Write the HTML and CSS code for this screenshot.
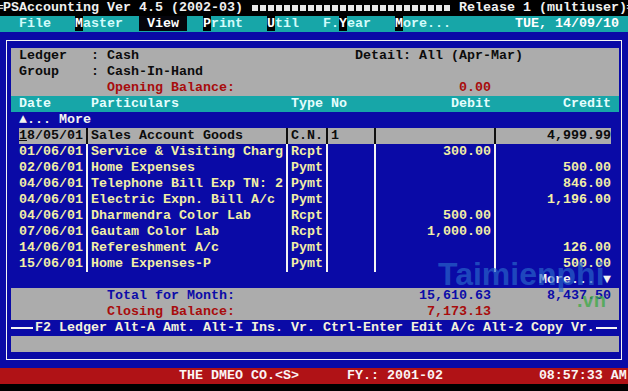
FILE: index.html
```html
<!DOCTYPE html>
<html>
<head>
<meta charset="utf-8">
<link rel="stylesheet" href="styles.css">
</head>
<body>
<div class="screen">
  <div class="row title">═PSAccounting Ver 4.5 (2002-03) <span class="blocks"></span> Release 1 (multiuser)═</div>
  <div class="row menu">   File   <span class="hk">M</span>aster  <span class="on"> View </span>  <span class="hk">P</span>rint   <span class="hk">U</span>til   F.<span class="hk">Y</span>ear   <span class="hk">M</span>ore...        <span class="date">TUE, 14/09/10</span></div>
  <div class="win">
    <div class="frame">
      <div class="row panel"> Ledger   : Cash                           Detail: All (Apr-Mar)</div>
      <div class="row panel"> Group    : Cash-In-Hand</div>
      <div class="row panel"><span class="red">            Opening Balance:                            0.00</span></div>

      <div class="grid head">
        <span></span><span>Date</span><span></span><span>Particulars</span><span></span><span>Type</span><span></span><span>No</span><span></span><span class="r">Debit</span><span></span><span class="r">Credit</span><span></span>
      </div>

      <div class="row blue"> ▲... More</div>

      <div class="grid data cur">
        <span></span><span><span class="cursor">1</span>8/05/01</span><span class="s"></span><span>Sales Account Goods</span><span class="s"></span><span>C.N.</span><span class="s"></span><span>1</span><span class="s"></span><span class="r"></span><span class="s"></span><span class="r">4,999.99</span><span></span>
      </div>
      <div class="grid data">
        <span></span><span>01/06/01</span><span class="s"></span><span>Service &amp; Visiting Charg</span><span class="s"></span><span>Rcpt</span><span class="s"></span><span></span><span class="s"></span><span class="r">300.00</span><span class="s"></span><span class="r"></span><span></span>
      </div>
      <div class="grid data">
        <span></span><span>02/06/01</span><span class="s"></span><span>Home Expenses</span><span class="s"></span><span>Pymt</span><span class="s"></span><span></span><span class="s"></span><span class="r"></span><span class="s"></span><span class="r">500.00</span><span></span>
      </div>
      <div class="grid data">
        <span></span><span>04/06/01</span><span class="s"></span><span>Telephone Bill Exp TN: 2</span><span class="s"></span><span>Pymt</span><span class="s"></span><span></span><span class="s"></span><span class="r"></span><span class="s"></span><span class="r">846.00</span><span></span>
      </div>
      <div class="grid data">
        <span></span><span>04/06/01</span><span class="s"></span><span>Electric Expn. Bill A/c</span><span class="s"></span><span>Pymt</span><span class="s"></span><span></span><span class="s"></span><span class="r"></span><span class="s"></span><span class="r">1,196.00</span><span></span>
      </div>
      <div class="grid data">
        <span></span><span>04/06/01</span><span class="s"></span><span>Dharmendra Color Lab</span><span class="s"></span><span>Rcpt</span><span class="s"></span><span></span><span class="s"></span><span class="r">500.00</span><span class="s"></span><span class="r"></span><span></span>
      </div>
      <div class="grid data">
        <span></span><span>07/06/01</span><span class="s"></span><span>Gautam Color Lab</span><span class="s"></span><span>Rcpt</span><span class="s"></span><span></span><span class="s"></span><span class="r">1,000.00</span><span class="s"></span><span class="r"></span><span></span>
      </div>
      <div class="grid data">
        <span></span><span>14/06/01</span><span class="s"></span><span>Refereshment A/c</span><span class="s"></span><span>Pymt</span><span class="s"></span><span></span><span class="s"></span><span class="r"></span><span class="s"></span><span class="r">126.00</span><span></span>
      </div>
      <div class="grid data">
        <span></span><span>15/06/01</span><span class="s"></span><span>Home Expenses-P</span><span class="s"></span><span>Pymt</span><span class="s"></span><span></span><span class="s"></span><span class="r"></span><span class="s"></span><span class="r">500.00</span><span></span>
      </div>

      <div class="row blue more">More... ▼ </div>

      <div class="grid totals navy">
        <span class="label">Total for Month:</span><span></span><span class="r">15,610.63</span><span></span><span class="r">8,437.50</span><span></span>
      </div>
      <div class="grid totals red">
        <span class="label">Closing Balance:</span><span></span><span class="r">7,173.13</span><span></span><span class="r"></span><span></span>
      </div>

      <div class="keys">
        <span class="rule first"></span><span class="keytext">F2 Ledger Alt-A Amt. Alt-I Ins. Vr. Ctrl-Enter Edit A/c Alt-2 Copy Vr.</span><span class="rule last"></span>
      </div>
      <div class="row panel"></div>
    </div>
  </div>
  <div class="row status">                       THE DMEO CO.&lt;S&gt;      FY.: 2001-02            08:57:33 AM</div>
  <div class="tail"></div>

  <div class="wm">Taimienphi</div>
  <div class="wm2">.vn</div>
</div>
</body>
</html>
```
FILE: styles.css
```css
* { margin: 0; padding: 0; box-sizing: border-box; }
html, body { width: 628px; height: 391px; overflow: hidden; background: #000; }
body {
  font-family: "Liberation Mono", "DejaVu Sans Mono", monospace;
  font-size: 13.333px;
  font-weight: bold;
  line-height: 16px;
}
.screen { position: relative; width: 640px; margin-left: -5px; }
.row { height: 16px; white-space: pre; }

.title { background: #000; color: #f0f0f0; }
.blocks {
  display: inline-block; width: 200px; height: 16px; vertical-align: top;
  background: repeating-linear-gradient(to right, transparent 0 1px, #e8e8e8 1px 7px, transparent 7px 8px) 0 5px / 200px 6px no-repeat;
}

.menu { background: #17a6a8; color: #d2fbfb; }
.menu .hk { background: #000; color: #fff; }
.menu .on { background: #05050c; color: #fff; }
.menu .date { color: #fff; }

.win { background: #0a0aa6; height: 336px; padding: 8px 13px 8px 11px; }
.frame { border: 1px solid #f4f4f4; height: 320px; padding: 7px 2px 7px 4px; }

.panel { background: #acacac; color: #0c0c0c; }
.red { color: #a80c0c; }
.navy { color: #0c0ca8; }
.blue { background: #0a0aa6; color: #f4f4f0; }
.more { text-align: right; padding-right: 0; }

.grid {
  display: grid;
  grid-template-columns: 8px 64px 8px 192px 8px 32px 8px 40px 8px 112px 8px 112px 8px;
  height: 16px;
  white-space: pre;
}
.grid .r { text-align: right; }
.head { background: #17a6a8; color: #e4fdfd; }
.data { background: #0a0aa6; color: #f2eea6; }
.data .s { background-image: linear-gradient(#f4f4f4, #f4f4f4); background-repeat: no-repeat; background-position: 3px 0; background-size: 2px 100%; }
.cur > span:not(:first-child):not(:last-child) { background-color: #acacac; color: #0c0c0c; }
.cur > .s { background-image: linear-gradient(#101010, #101010); }
.cursor { box-shadow: inset 0 -2px 0 -0px #acacac, inset 0 -3px 0 0 #101010; }

.totals {
  background: #acacac;
  grid-template-columns: 360px 8px 112px 8px 112px 8px;
}
.totals .label { padding-left: 96px; }

.keys { display: flex; height: 16px; background: #0a0aa6; color: #f4f2dc; white-space: pre; }
.rule { height: 16px; background: linear-gradient(#f4f4f4, #f4f4f4) 0 7px / 100% 2px no-repeat; }
.rule.first { width: 22px; margin-right: 2px; }
.rule.last { flex: 1; margin-left: 1px; margin-right: 2px; }

.status { background: #b01216; color: #fbf4f4; }
.tail { height: 7px; background: #000; }

.wm {
  position: absolute; left: 443px; top: 258px;
  font-family: "Liberation Sans", sans-serif; font-weight: bold;
  font-size: 32px; line-height: 32px; color: rgba(40, 100, 200, 0.7);
}
.wm2 {
  position: absolute; left: 582px; top: 290px;
  font-family: "Liberation Sans", sans-serif; font-weight: bold;
  font-size: 20px; line-height: 20px; color: rgba(60, 170, 70, 0.75);
}
```
